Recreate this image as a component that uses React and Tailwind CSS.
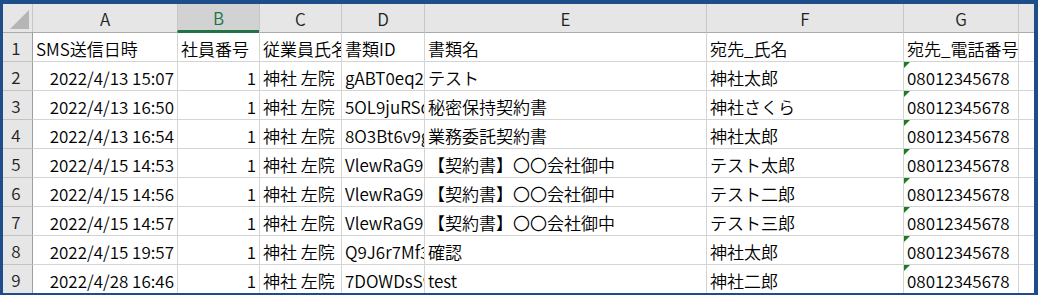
import React from 'react';

const COLS = ['A', 'B', 'C', 'D', 'E', 'F', 'G', ''];

// 右寄せする列: A (日時), B (社員番号)
const RIGHT = [true, true, false, false, false, false, false, false];

const ROWS = [
    ['SMS送信日時', '社員番号', '従業員氏名', '書類ID', '書類名', '宛先_氏名', '宛先_電話番号', ''],
    ['2022/4/13 15:07', '1', '神社 左院', 'gABT0eq2xK', 'テスト', '神社太郎', '08012345678', ''],
    ['2022/4/13 16:50', '1', '神社 左院', '5OL9juRSd', '秘密保持契約書', '神社さくら', '08012345678', ''],
    ['2022/4/13 16:54', '1', '神社 左院', '8O3Bt6v9g', '業務委託契約書', '神社太郎', '08012345678', ''],
    ['2022/4/15 14:53', '1', '神社 左院', 'VlewRaG9k', '【契約書】〇〇会社御中', 'テスト太郎', '08012345678', ''],
    ['2022/4/15 14:56', '1', '神社 左院', 'VlewRaG9k', '【契約書】〇〇会社御中', 'テスト二郎', '08012345678', ''],
    ['2022/4/15 14:57', '1', '神社 左院', 'VlewRaG9k', '【契約書】〇〇会社御中', 'テスト三郎', '08012345678', ''],
    ['2022/4/15 19:57', '1', '神社 左院', 'Q9J6r7Mf3', '確認', '神社太郎', '08012345678', ''],
    ['2022/4/28 16:46', '1', '神社 左院', '7DOWDsS9', 'test', '神社二郎', '08012345678', ''],
];

export default function App() {
    return (
        <div className="w-[1038px] h-[295px] bg-[#1d4e89] pt-[4px] pl-[3px] pr-[4px] pb-[2px] font-['Noto_Sans_CJK_JP','Noto_Sans',sans-serif] font-[350] text-[17px] leading-none text-black">
            <div className="bg-white h-full grid grid-cols-[29px_145px_82px_82px_83px_282px_197px_115px_1fr] grid-rows-[28px_repeat(9,29px)] overflow-hidden">
                {/* 左上の角 */}
                <div className="bg-[#e6e6e6] relative">
                    <div className="absolute right-[3px] bottom-[3px] w-0 h-0 border-b-[19px] border-b-[#b5b5b5] border-l-[19px] border-l-transparent" />
                </div>

                {/* 列見出し */}
                {COLS.map((c, i) => (
                    <div
                        key={'h' + i}
                        className={`flex items-center justify-center border-l pt-[1px] ${
                            c === 'B'
                                ? 'bg-[#d2d2d2] text-[#217346] border-[#c6c6c6] border-b-2 border-b-[#217346]'
                                : 'bg-[#e6e6e6] text-[#222] border-[#c6c6c6]'
                        }`}
                    >
                        {c}
                    </div>
                ))}

                {/* データ行 */}
                {ROWS.map((row, r) => (
                    <React.Fragment key={'r' + r}>
                        <div className={`bg-[#e6e6e6] text-[#222] flex items-center justify-center pr-[3px] border-t ${r === 0 ? 'border-[#ababab]' : 'border-[#c3c3c3]'}`}>
                            {r + 1}
                        </div>
                        {row.map((cell, i) => (
                            <div
                                key={i}
                                className={`relative flex items-center overflow-hidden whitespace-nowrap border-t ${
                                    i === 0 ? 'border-l border-l-[#9e9e9e]' : 'border-l border-l-[#d4d4d4]'
                                } ${r === 0 ? (i === 1 ? 'border-t-[#217346]' : 'border-t-[#ababab]') : 'border-t-[#d4d4d4]'} ${
                                    RIGHT[i] && r > 0 ? 'justify-end pr-[3px]' : 'pl-[3px]'
                                }`}
                            >
                                {i === 6 && r > 0 && (
                                    <span className="absolute top-0 left-0 w-0 h-0 border-t-[6px] border-t-[#1b7d1b] border-r-[6px] border-r-transparent" />
                                )}
                                <span className="pt-[2px]">{cell}</span>
                            </div>
                        ))}
                    </React.Fragment>
                ))}
            </div>
        </div>
    );
}
